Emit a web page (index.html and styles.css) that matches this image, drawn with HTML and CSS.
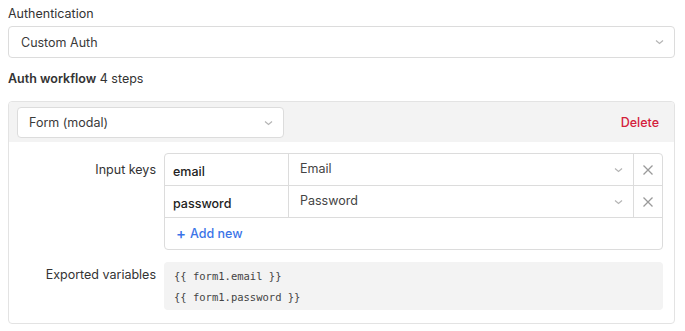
FILE: index.html
```html
<!DOCTYPE html>
<html>
<head>
<meta charset="utf-8">
<link rel="stylesheet" href="styles.css">
</head>
<body>
<div class="page">
  <div class="field-label">Authentication</div>
  <div class="select main-select">
    <span>Custom Auth</span>
    <svg class="chev" width="9" height="6" viewBox="0 0 9 6"><path d="M1 1.5 L4.5 4.5 L8 1.5" fill="none" stroke="#b5b5b5" stroke-width="1.2"/></svg>
  </div>
  <div class="workflow-title"><b>Auth workflow</b> 4 steps</div>
  <div class="card">
    <div class="card-head">
      <div class="select step-select">
        <span>Form (modal)</span>
        <svg class="chev" width="9" height="6" viewBox="0 0 9 6"><path d="M1 1.5 L4.5 4.5 L8 1.5" fill="none" stroke="#b5b5b5" stroke-width="1.2"/></svg>
      </div>
      <span class="delete">Delete</span>
    </div>
    <div class="card-body">
      <div class="row">
        <div class="row-label">Input keys</div>
        <div class="keys">
          <div class="key-row">
            <div class="key">email</div>
            <div class="kind"><span>Email</span><svg class="chev" width="9" height="6" viewBox="0 0 9 6"><path d="M1 1.5 L4.5 4.5 L8 1.5" fill="none" stroke="#b5b5b5" stroke-width="1.2"/></svg></div>
            <div class="remove"><svg width="12" height="12" viewBox="0 0 12 12"><path d="M1.5 1.5 L10.5 10.5 M10.5 1.5 L1.5 10.5" stroke="#9a9a9a" stroke-width="1.3"/></svg></div>
          </div>
          <div class="key-row">
            <div class="key">password</div>
            <div class="kind"><span>Password</span><svg class="chev" width="9" height="6" viewBox="0 0 9 6"><path d="M1 1.5 L4.5 4.5 L8 1.5" fill="none" stroke="#b5b5b5" stroke-width="1.2"/></svg></div>
            <div class="remove"><svg width="12" height="12" viewBox="0 0 12 12"><path d="M1.5 1.5 L10.5 10.5 M10.5 1.5 L1.5 10.5" stroke="#9a9a9a" stroke-width="1.3"/></svg></div>
          </div>
          <div class="add-row"><span class="plus">+</span> Add new</div>
        </div>
      </div>
      <div class="row exported">
        <div class="row-label">Exported variables</div>
        <div class="code">{{ form1.email }}<br>{{ form1.password }}</div>
      </div>
    </div>
  </div>
</div>
</body>
</html>
```
FILE: styles.css
```css
* { box-sizing: border-box; }
html, body { margin: 0; padding: 0; background: #fff; }
body {
  font-family: Inter, "Noto Sans", sans-serif;
  font-size: 12.5px;
  color: #333;
}
.page {
  padding: 6px 10px 0 8px;
}
.field-label {
  line-height: 16px;
  color: #333;
}
.select {
  display: flex;
  align-items: center;
  justify-content: space-between;
  border: 1px solid #dcdcdc;
  border-radius: 4px;
  background: #fff;
  color: #3a3a3a;
}
.main-select {
  margin-top: 4px;
  height: 32px;
  padding: 0 10px 0 12px;
}
.workflow-title {
  margin-top: 13px;
  line-height: 16px;
  color: #333;
}
.workflow-title b { font-weight: 600; }
.card {
  margin-top: 14px;
  border: 1px solid #e3e3e3;
  border-radius: 4px;
}
.card-head {
  background: #f3f3f3;
  display: flex;
  align-items: center;
  justify-content: space-between;
  padding: 5px 15px 4px 8px;
  border-radius: 4px 4px 0 0;
}
.step-select {
  width: 267px;
  height: 31px;
  padding: 0 10px 0 11px;
}
.delete {
  color: #d3203b;
  font-weight: 500;
}
.card-body {
  padding: 11px 11px 13px 0;
  display: flex;
  flex-direction: column;
  gap: 12px;
}
.row {
  display: flex;
  gap: 8px;
}
.row-label {
  width: 147px;
  flex: none;
  text-align: right;
  padding-top: 9px;
  line-height: 16px;
  color: #333;
}
.keys {
  flex: 1;
  border: 1px solid #dcdcdc;
  border-radius: 4px;
}
.key-row {
  display: flex;
  height: 32px;
  border-bottom: 1px solid #dcdcdc;
}
.key {
  width: 124px;
  border-right: 1px solid #dcdcdc;
  padding: 10px 0 0 8px;
  color: #222;
  font-weight: 500;
}
.kind {
  flex: 1;
  display: flex;
  align-items: center;
  justify-content: space-between;
  padding: 0 10px 3px 11px;
  border-right: 1px solid #dcdcdc;
  color: #444;
}
.kind .chev { margin-top: 3px; }
.remove {
  width: 28px;
  display: flex;
  align-items: center;
  justify-content: center;
}
.add-row {
  height: 31px;
  display: flex;
  align-items: center;
  padding-left: 11px;
  color: #3a74e8;
  font-weight: 500;
}
.plus { margin-right: 4px; font-size: 15px; }
.exported .row-label { padding-top: 5px; }
.code {
  flex: 1;
  background: #f3f3f3;
  border-radius: 4px;
  padding: 4px 10px 4px;
  font-family: "DejaVu Sans Mono", "Liberation Mono", monospace;
  font-size: 10.5px;
  line-height: 21px;
  color: #444;
  height: 48px;
}
```
